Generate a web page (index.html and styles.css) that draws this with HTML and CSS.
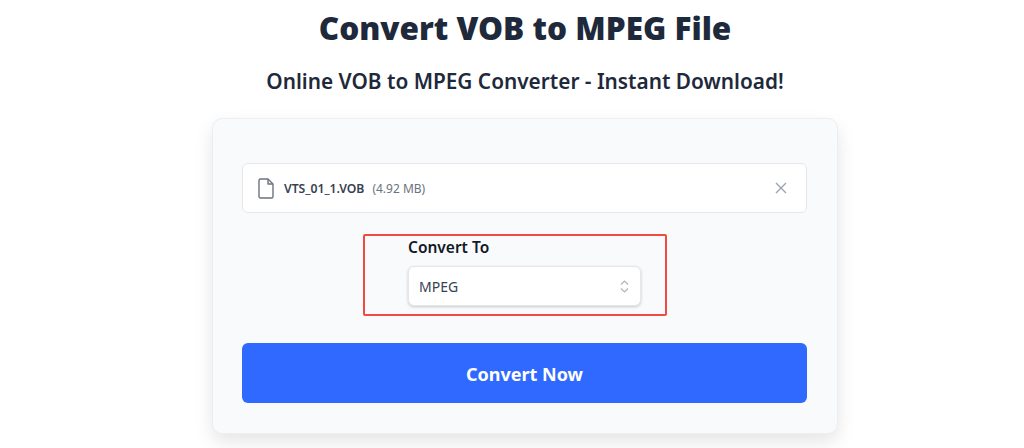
FILE: index.html
```html
<!DOCTYPE html>
<html>
  <head>
    <title>Convert VOB to MPEG File</title>
    <link rel="stylesheet" href="styles.css">
  </head>
  <body>
    <div class="page">
      <h1>Convert VOB to MPEG File</h1>
      <h2>Online VOB to MPEG Converter - Instant Download!</h2>
      <div class="card">
        <div class="file-row">
          <svg class="file-icon" width="16" height="21" viewBox="0 0 16 21" fill="none" stroke="#6b7280" stroke-width="1.4" stroke-linejoin="round">
            <path d="M2.5 1h7.5l5 5v12.5a1.5 1.5 0 0 1-1.5 1.5h-11a1.5 1.5 0 0 1-1.5-1.5v-16a1.5 1.5 0 0 1 1.5-1.5z"/>
            <path d="M10 1v5h5"/>
          </svg>
          <span class="file-name">VTS_01_1.VOB</span>
          <span class="file-size">(4.92 MB)</span>
          <svg class="file-close" width="12" height="12" viewBox="0 0 12 12" fill="none" stroke="#9ca3af" stroke-width="1.4">
            <path d="M1 1l10 10M11 1L1 11"/>
          </svg>
        </div>
        <div class="format">
          <div class="format-label">Convert To</div>
          <div class="format-select">
            <span>MPEG</span>
            <svg width="9" height="13" viewBox="0 0 9 13" fill="none" stroke="#b0b5bf" stroke-width="1.2">
              <path d="M1 4.5l3.5-3.5 3.5 3.5M1 8.5l3.5 3.5 3.5-3.5"/>
            </svg>
          </div>
          <div class="highlight"></div>
        </div>
        <button class="convert">Convert Now</button>
      </div>
    </div>
  </body>
</html>
```

FILE: styles.css
```css
html, body {
  height: 448px;
  overflow: hidden;
}
body {
  margin: 0;
  background-color: #ffffff;
  color: #1e293b;
  font-family: "Noto Sans", "Open Sans", sans-serif;
}
.page {
  width: 626px;
  margin-left: 212px;
}
h1 {
  margin: 0;
  padding-top: 6px;
  height: 43px;
  line-height: 43px;
  text-align: center;
  font-size: 31.5px;
  font-weight: 900;
}
h2 {
  margin: 0;
  padding-top: 17px;
  height: 31px;
  line-height: 31px;
  text-align: center;
  font-size: 20.8px;
  font-weight: 600;
}

/* Main card */
.card {
  box-sizing: border-box;
  height: 316px;
  margin-top: 21px;
  padding: 44px 29px 0;
  background-color: #f9fafb;
  border: 1px solid #eceef2;
  border-radius: 10px;
  box-shadow: 0 8px 18px rgba(0, 0, 0, 0.1);
}

/* Uploaded file row */
.file-row {
  box-sizing: border-box;
  display: flex;
  align-items: center;
  width: 565px;
  height: 50px;
  padding: 0 19px 0 15px;
  background-color: #ffffff;
  border: 1px solid #e5e7eb;
  border-radius: 6px;
}
.file-name {
  margin-left: 10px;
  font-size: 12.2px;
  font-weight: 600;
  color: #374151;
}
.file-size {
  margin-left: 8px;
  font-size: 12px;
  color: #6b7280;
}
.file-close {
  margin-left: auto;
}

/* Format select */
.format {
  position: relative;
  width: 233px;
  margin: 24px 0 0 166px;
}
.format-label {
  height: 21px;
  line-height: 21px;
  font-size: 15.5px;
  font-weight: 600;
  color: #111827;
}
.format-select {
  box-sizing: border-box;
  display: flex;
  align-items: center;
  justify-content: space-between;
  height: 40px;
  margin-top: 8px;
  padding: 0 11px 0 10px;
  background-color: #ffffff;
  border: 1px solid #e5e7eb;
  border-radius: 6px;
  box-shadow: 0 1px 3px rgba(0, 0, 0, 0.2);
  font-size: 14px;
  color: #374151;
}

/* Red annotation drawn over the select */
.highlight {
  position: absolute;
  top: -3px;
  left: -45px;
  width: 300px;
  height: 78px;
  border: 2px solid #f04a43;
  border-radius: 2px;
}

.convert {
  display: block;
  width: 565px;
  height: 60px;
  margin-top: 37px;
  padding-top: 2px;
  background-color: #2f69ff;
  border: none;
  border-radius: 6px;
  color: #ffffff;
  font-family: inherit;
  font-size: 18px;
  font-weight: 700;
}
```
